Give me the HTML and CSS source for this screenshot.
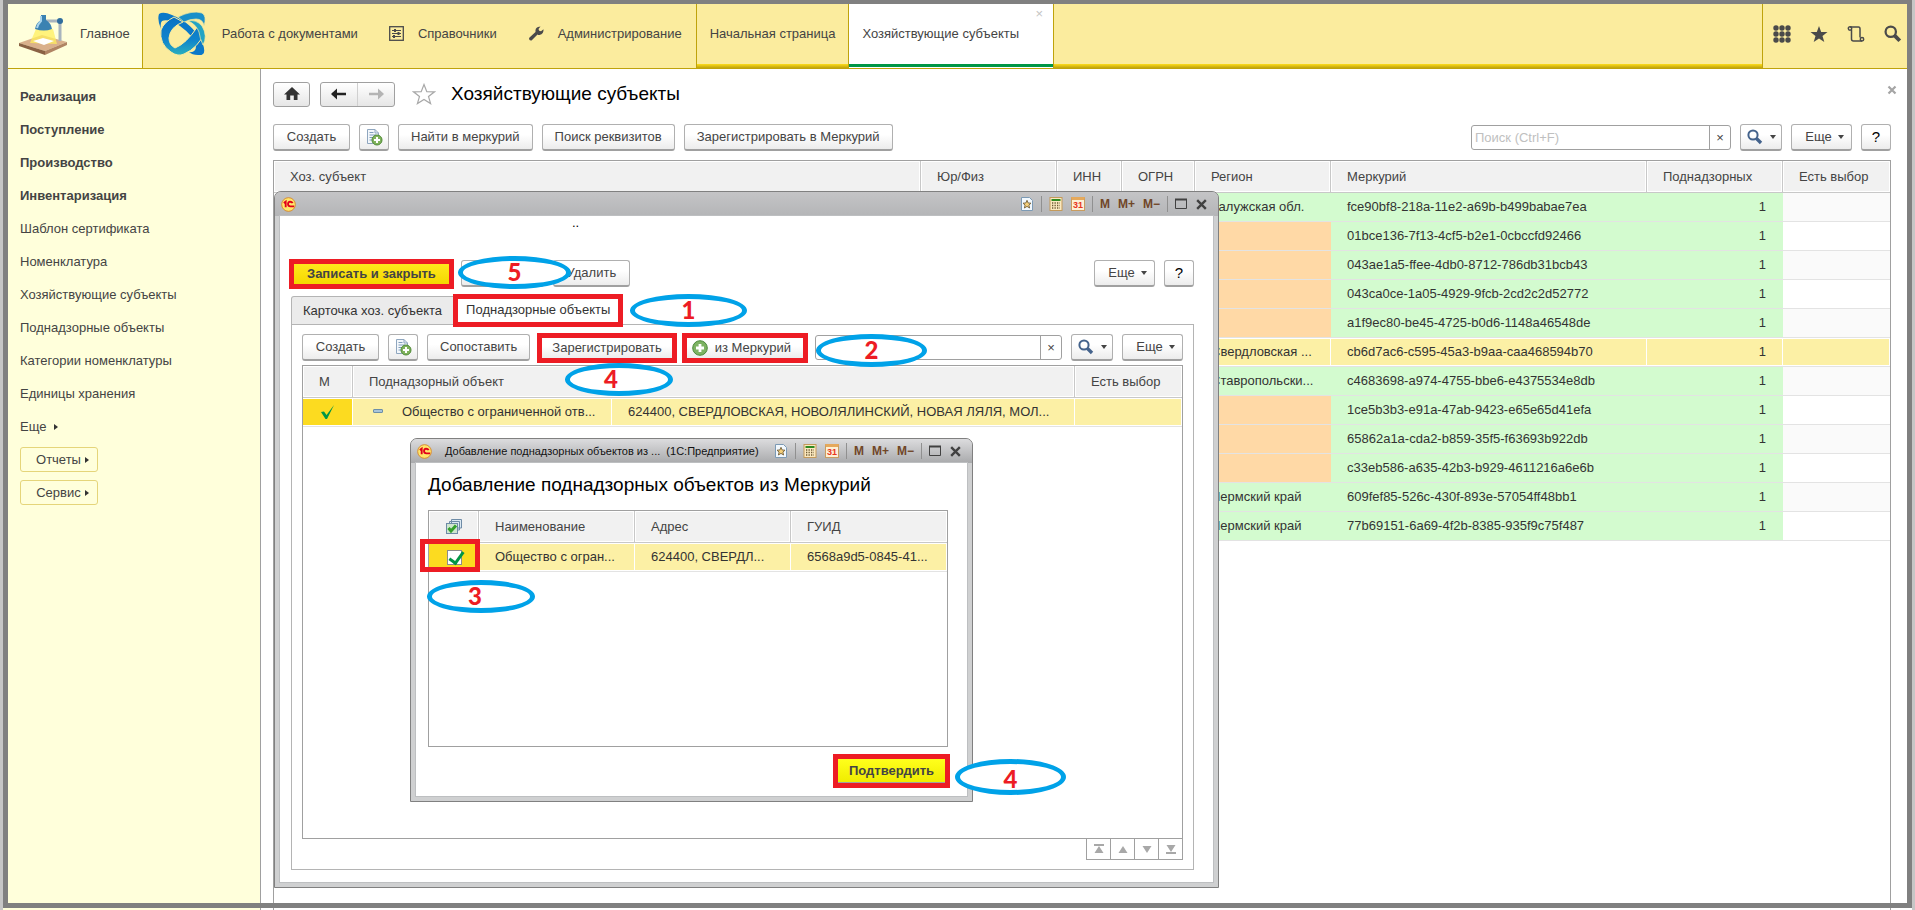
FILE: index.html
```html
<!DOCTYPE html>
<html lang="ru">
<head>
  <meta charset="UTF-8">
  <title>Хозяйствующие субъекты</title>
  <link rel="stylesheet" href="styles.css">
</head>
<body>
  <svg class="sprite" aria-hidden="true">
    <symbol id="i-search" viewBox="0 0 16 16">
      <circle cx="6" cy="6" r="4.6" fill="none" stroke="currentColor" stroke-width="2"/>
      <path d="M9.5 9.5 L14 14" stroke="currentColor" stroke-width="3.4"/>
    </symbol>
    <symbol id="i-copy" viewBox="0 0 18 18">
      <path d="M2.5 1.5 H10 L13.5 5 V15.5 H2.5 Z" fill="#f3f7fb" stroke="#8fa6bf"/>
      <path d="M10 1.5 V5 H13.5" fill="none" stroke="#8fa6bf"/>
      <path d="M4.500 4.500 H8.500 M4.500 7 H11 M4.500 9.500 H9 M4.500 12 H7" stroke="#7f9dbb"/>
      <circle cx="12" cy="12" r="5" fill="#7fb25c" stroke="#4f8a35"/>
      <path d="M12 9 V15 M9 12 H15" stroke="#fff" stroke-width="2"/>
    </symbol>
    <symbol id="i-plus" viewBox="0 0 16 16">
      <circle cx="8" cy="8" r="7.300" fill="#7db363" stroke="#4c8a3b"/>
      <path d="M8 4 V12 M4 8 H12" stroke="#fff" stroke-width="2.800"/>
    </symbol>
    <symbol id="i-1c" viewBox="0 0 16 16">
      <circle cx="8" cy="8" r="7.300" fill="#ffe66a" stroke="#d98a2b"/>
      <path d="M3 6.500 L5 5 V11 M12.500 6.500 Q11.500 5 9.800 5 Q7.500 5.300 7.500 7.500 Q7.600 10 10 10 H14" fill="none" stroke="#e2001a" stroke-width="2"/>
    </symbol>
    <symbol id="i-fav" viewBox="0 0 14 14">
      <path d="M1.500 .5 H9.500 L12.500 3.500 V13.500 H1.500 Z" fill="#f2f8fd" stroke="#7c9ab5"/>
      <path d="M7 3.300 L8.200 6 L11 6.200 L8.900 8.100 L9.600 11 L7 9.400 L4.400 11 L5.100 8.100 L3 6.200 L5.800 6 Z" fill="#f4cf7a" stroke="#75603a" stroke-width=".9"/>
    </symbol>
    <symbol id="i-calc" viewBox="0 0 14 14">
      <rect x="1" y=".5" width="12" height="13" fill="#fbe9c0" stroke="#c49a5b"/>
      <rect x="2.500" y="2" width="9" height="2" fill="#2f8a1f"/>
      <path d="M3 6 H11 M3 8.500 H11 M3 11 H11" stroke="#6d5a33" stroke-width="1.300" stroke-dasharray="1.300 1.200"/>
    </symbol>
    <symbol id="i-max" viewBox="0 0 12 12">
      <path d="M.5 1.500 H11.500 V10.500 H.5 Z" fill="none" stroke="#414141"/>
      <path d="M0 1.500 H12" stroke="#414141" stroke-width="2"/>
    </symbol>
    <symbol id="i-close" viewBox="0 0 12 12">
      <path d="M2 2 L10 10 M10 2 L2 10" stroke="#414141" stroke-width="2.200"/>
    </symbol>
    <symbol id="i-check" viewBox="0 0 16 16">
      <path d="M1 8 L4 7.500 L6.500 11 L14 1 L7 15 L5.500 15 Z" fill="#009646"/>
    </symbol>
  </svg>

  <div class="app">
    <header class="topbar">
      <nav class="sections">
        <a href="#" class="section active">
          <svg width="50" height="42" viewBox="0 0 50 42">
            <path d="M1 30 L24 22 L49 29 L27 38 Z" fill="#d9b08c"/>
            <path d="M1 30 L27 38 V42 L1 33 Z" fill="#8a6244"/>
            <path d="M27 38 L49 29 V32 L27 42 Z" fill="#b08463"/>
            <path d="M18 16 L35 16 L39 31 L12 30 Z" fill="#ffef5e" opacity=".75"/>
            <path d="M15 28 L25 25 L36 28 L26 32 Z" fill="#fff"/>
            <path d="M28 8 H42 V28" fill="none" stroke="#a8b4be" stroke-width="3"/>
            <circle cx="42" cy="8" r="3" fill="#2f6d9d"/>
            <path d="M23 2 H28 V7 Q33 10 34 16 Q26 19 17 16 Q18 10 23 7 Z" fill="#3a82b2"/>
            <path d="M23 3 V8 Q20 11 19 15" fill="none" stroke="#a9d4ec" stroke-width="2"/>
          </svg>
          <span>Главное</span>
        </a>
        <a href="#" class="section docs">
          <svg width="48" height="44" viewBox="0 0 48 44">
            <defs>
              <linearGradient id="orb" x1="0" y1="0" x2="0" y2="1">
                <stop offset="0" stop-color="#0a70c4"/>
                <stop offset=".6" stop-color="#0f84cc"/>
                <stop offset="1" stop-color="#2cb0bd"/>
              </linearGradient>
            </defs>
            <!-- орбита сзади -->
            <path d="M1 2 Q5 -1 14 3 Q34 11 44 30 Q50 44 40 43 Q34 43 31 40 Q38 41 38 34 Q36 24 22 14 Q10 6 4 9 Q2 11 3 17 Q-1 8 1 2 Z" fill="#0b78c8"/>
            <!-- орбита спереди -->
            <path d="M3 18 Q6 10 16 5 L25 10 Q12 15 11 26 Q11 33 17 36 Q28 32 40 14 L47 20 Q40 36 26 42 Q20 45 13 40 Q1 32 3 18 Z" fill="url(#orb)" stroke="#fbec9e"/>
            <path d="M20 5 Q34 -2 44 1 Q49 4 46 14 Q45 7 38 7 Q32 7 26 10 Z" fill="#1a8fc9" stroke="#fbec9e" stroke-width=".7"/>
            <path d="M30 9 Q38 7 44 14 Q50 24 45 33 Q42 27 41 20 Q38 12 30 9 Z" fill="#22a4c4" stroke="#fbec9e" stroke-width=".7"/>
          </svg>
          <span>Работа с документами</span>
        </a>
        <a href="#" class="section">
          <svg width="15" height="15" viewBox="0 0 15 15" fill="none" stroke="#4a4a4a">
            <rect x=".7" y=".7" width="13.600" height="13.600" stroke-width="1.300"/>
            <path d="M3 4.500 H12 M3 7.500 H12 M3 10.500 H12"/>
            <path d="M6 3 V6 M9.500 6 V9 M5 9 V12" stroke-width="2"/>
          </svg>
          <span>Справочники</span>
        </a>
        <a href="#" class="section">
          <svg width="16" height="15" viewBox="0 0 16 15">
            <path d="M1 12 L7.500 6 Q7 2 10 1 L12.500 .5 L10.500 3 L11.200 4.800 L13 5.300 L15.500 3.200 Q16 8 11.500 9 Q10.500 9.200 9.500 8.500 L3.500 14.500 Q1 15 1 12 Z" fill="#4a4a4a"/>
          </svg>
          <span>Администрирование</span>
        </a>
      </nav>
      <div class="tabs">
        <a href="#" class="tab">Начальная страница</a>
        <a href="#" class="tab current">Хозяйствующие субъекты<span class="tab-close">×</span></a>
      </div>
      <div class="tools">
        <button type="button" aria-label="Меню функций">
          <svg width="18" height="18" viewBox="0 0 18 18">
            <path d="M3 3 H3 M9 3 H9 M15 3 H15 M3 9 H3 M9 9 H9 M15 9 H15 M3 15 H3 M9 15 H9 M15 15 H15" stroke="#4a4a4a" stroke-width="5.400" stroke-linecap="round"/>
          </svg>
        </button>
        <button type="button" aria-label="Избранное">
          <svg width="18" height="18" viewBox="0 0 18 18">
            <path d="M9 1 L11.200 6.900 L17.500 7.100 L12.500 11 L14.300 17 L9 13.400 L3.700 17 L5.500 11 L.5 7.100 L6.800 6.900 Z" fill="#4a4a4a"/>
          </svg>
        </button>
        <button type="button" aria-label="История">
          <svg width="18" height="18" viewBox="0 0 18 18" fill="none" stroke="#4a4a4a" stroke-width="1.500">
            <path d="M3 2 H11.500 Q13 2 13 4 V12.500 M4.500 4.500 V14 Q4.500 16 6.500 16 H15"/>
            <circle cx="3" cy="3.500" r="1.700"/>
            <circle cx="15" cy="14.300" r="1.700"/>
          </svg>
        </button>
        <button type="button" aria-label="Поиск"><svg width="18" height="18"><use href="#i-search"/></svg></button>
      </div>
    </header>

    <div class="body">
      <aside class="sidebar">
        <a href="#" class="strong">Реализация</a>
        <a href="#" class="strong">Поступление</a>
        <a href="#" class="strong">Производство</a>
        <a href="#" class="strong">Инвентаризация</a>
        <a href="#">Шаблон сертификата</a>
        <a href="#">Номенклатура</a>
        <a href="#">Хозяйствующие субъекты</a>
        <a href="#">Поднадзорные объекты</a>
        <a href="#">Категории номенклатуры</a>
        <a href="#">Единицы хранения</a>
        <a href="#">Еще <i class="arrow-right"></i></a>
        <button type="button" class="side-btn">Отчеты<i class="arrow-right"></i></button>
        <button type="button" class="side-btn">Сервис<i class="arrow-right"></i></button>
      </aside>

      <main class="main">
        <div class="title-row">
          <button type="button" class="btn nav-btn" aria-label="Домой">
            <svg width="16" height="14" viewBox="0 0 16 14"><path d="M8 0 L16 7.500 H13.500 V13 H9.800 V8.500 H6.200 V13 H2.500 V7.500 H0 Z" fill="#333"/></svg>
          </button>
          <div class="nav-pair">
            <button type="button" aria-label="Назад">
              <svg width="16" height="12" viewBox="0 0 16 12"><path d="M1.500 6 H15" stroke="#222" stroke-width="2.500"/><path d="M0 6 L6 .5 V11.500 Z" fill="#222"/></svg>
            </button>
            <button type="button" aria-label="Вперед">
              <svg width="16" height="12" viewBox="0 0 16 12"><path d="M1 6 H14" stroke="#b4b4b4" stroke-width="2.500"/><path d="M16 6 L10 .5 V11.500 Z" fill="#b4b4b4"/></svg>
            </button>
          </div>
          <svg class="star" width="24" height="22" viewBox="0 0 24 22">
            <path d="M12 1.500 L14.800 8.600 L22.500 8.800 L16.500 13.400 L18.600 20.600 L12 16.500 L5.400 20.600 L7.500 13.400 L1.500 8.800 L9.200 8.600 Z" fill="none" stroke="#a8a8a8" stroke-width="1.200"/>
          </svg>
          <h1>Хозяйствующие субъекты</h1>
          <button type="button" class="page-close" aria-label="Закрыть">
            <svg width="10" height="10" viewBox="0 0 10 10"><path d="M1.500 1.500 L8.500 8.500 M8.500 1.500 L1.500 8.500" stroke="#a5a5a5" stroke-width="2.200"/></svg>
          </button>
        </div>

        <div class="toolbar">
          <button type="button" class="btn">Создать</button>
          <button type="button" class="btn icon-btn" aria-label="Скопировать"><svg width="18" height="18"><use href="#i-copy"/></svg></button>
          <button type="button" class="btn">Найти в меркурий</button>
          <button type="button" class="btn">Поиск реквизитов</button>
          <button type="button" class="btn">Зарегистрировать в Меркурий</button>
          <div class="search main-search">
            <input type="text" placeholder="Поиск (Ctrl+F)" aria-label="Поиск">
            <button type="button" aria-label="Очистить">×</button>
          </div>
          <button type="button" class="btn find-btn" aria-label="Найти"><svg width="16" height="16"><use href="#i-search"/></svg><i class="arrow-down"></i></button>
          <button type="button" class="btn more-btn">Еще <i class="arrow-down"></i></button>
          <button type="button" class="btn icon-btn help">?</button>
        </div>

        <div class="grid-box">
          <table class="grid">
            <colgroup>
              <col><col class="w136"><col class="w65"><col class="w73"><col class="w136"><col class="w316"><col class="w136"><col class="w107">
            </colgroup>
            <thead>
              <tr><th>Хоз. субъект</th><th>Юр/Физ</th><th>ИНН</th><th>ОГРН</th><th>Регион</th><th>Меркурий</th><th>Поднадзорных</th><th>Есть выбор</th></tr>
            </thead>
            <tbody>
              <tr><td></td><td></td><td></td><td></td><td class="ok">Калужская обл.</td><td class="ok">fce90bf8-218a-11e2-a69b-b499babae7ea</td><td class="ok num">1</td><td></td></tr>
              <tr><td></td><td></td><td></td><td></td><td class="warn"></td><td class="ok">01bce136-7f13-4cf5-b2e1-0cbccfd92466</td><td class="ok num">1</td><td></td></tr>
              <tr><td></td><td></td><td></td><td></td><td class="warn"></td><td class="ok">043ae1a5-ffee-4db0-8712-786db31bcb43</td><td class="ok num">1</td><td></td></tr>
              <tr><td></td><td></td><td></td><td></td><td class="warn"></td><td class="ok">043ca0ce-1a05-4929-9fcb-2cd2c2d52772</td><td class="ok num">1</td><td></td></tr>
              <tr><td></td><td></td><td></td><td></td><td class="warn"></td><td class="ok">a1f9ec80-be45-4725-b0d6-1148a46548de</td><td class="ok num">1</td><td></td></tr>
              <tr class="selected"><td></td><td></td><td></td><td></td><td>Свердловская ...</td><td>cb6d7ac6-c595-45a3-b9aa-caa468594b70</td><td class="num">1</td><td></td></tr>
              <tr><td></td><td></td><td></td><td></td><td class="ok">Ставропольски...</td><td class="ok">c4683698-a974-4755-bbe6-e4375534e8db</td><td class="ok num">1</td><td></td></tr>
              <tr><td></td><td></td><td></td><td></td><td class="warn"></td><td class="ok">1ce5b3b3-e91a-47ab-9423-e65e65d41efa</td><td class="ok num">1</td><td></td></tr>
              <tr><td></td><td></td><td></td><td></td><td class="warn"></td><td class="ok">65862a1a-cda2-b859-35f5-f63693b922db</td><td class="ok num">1</td><td></td></tr>
              <tr><td></td><td></td><td></td><td></td><td class="warn"></td><td class="ok">c33eb586-a635-42b3-b929-4611216a6e6b</td><td class="ok num">1</td><td></td></tr>
              <tr><td></td><td></td><td></td><td></td><td class="ok">Пермский край</td><td class="ok">609fef85-526c-430f-893e-57054ff48bb1</td><td class="ok num">1</td><td></td></tr>
              <tr><td></td><td></td><td></td><td></td><td class="ok">Пермский край</td><td class="ok">77b69151-6a69-4f2b-8385-935f9c75f487</td><td class="ok num">1</td><td></td></tr>
            </tbody>
          </table>
        </div>
      </main>
    </div>
  </div>

  <!-- Карточка хоз. субъекта -->
  <section class="window card-window">
    <div class="window-title">
      <svg width="15" height="15"><use href="#i-1c"/></svg>
      <span class="caption"></span>
      <div class="window-tools">
        <svg width="14" height="14"><use href="#i-fav"/></svg><i class="sep"></i>
        <svg width="14" height="14"><use href="#i-calc"/></svg>
        <span class="calendar">31</span><i class="sep"></i>
        <b>M</b><b>M+</b><b>M−</b><i class="sep"></i>
        <svg width="12" height="12"><use href="#i-max"/></svg>
        <svg width="13" height="13"><use href="#i-close"/></svg>
      </div>
    </div>
    <div class="window-body card-body">
      <p class="dots">..</p>
      <div class="toolbar">
        <button type="button" class="btn marked primary">Записать и закрыть</button>
        <button type="button" class="btn save-btn" aria-label="Записать"></button>
        <button type="button" class="btn">Удалить</button>
        <span class="spacer"></span>
        <button type="button" class="btn more-btn">Еще <i class="arrow-down"></i></button>
        <button type="button" class="btn icon-btn help">?</button>
      </div>
      <div class="card-tabs">
        <button type="button" class="card-tab">Карточка хоз. субъекта</button>
        <button type="button" class="card-tab marked">Поднадзорные объекты</button>
      </div>
      <div class="card-panel">
        <div class="toolbar">
          <button type="button" class="btn">Создать</button>
          <button type="button" class="btn icon-btn" aria-label="Скопировать"><svg width="18" height="18"><use href="#i-copy"/></svg></button>
          <button type="button" class="btn">Сопоставить</button>
          <button type="button" class="btn marked">Зарегистрировать</button>
          <button type="button" class="btn marked with-icon"><svg width="16" height="16"><use href="#i-plus"/></svg>из Меркурий</button>
          <div class="search">
            <input type="text" aria-label="Поиск">
            <button type="button" aria-label="Очистить">×</button>
          </div>
          <button type="button" class="btn find-btn" aria-label="Найти"><svg width="16" height="16"><use href="#i-search"/></svg><i class="arrow-down"></i></button>
          <button type="button" class="btn more-btn">Еще <i class="arrow-down"></i></button>
        </div>
        <div class="grid-box">
          <table class="grid">
            <colgroup><col class="w50"><col class="w259"><col><col class="w107"></colgroup>
            <thead>
              <tr><th>М</th><th colspan="2">Поднадзорный объект</th><th>Есть выбор</th></tr>
            </thead>
            <tbody>
              <tr class="selected">
                <td class="mark"><svg width="16" height="16"><use href="#i-check"/></svg></td>
                <td class="object"><i class="minus"></i>Общество с ограниченной отв...</td>
                <td>624400, СВЕРДЛОВСКАЯ, НОВОЛЯЛИНСКИЙ, НОВАЯ ЛЯЛЯ, МОЛ...</td>
                <td></td>
              </tr>
            </tbody>
          </table>
        </div>
        <div class="pager">
          <button type="button" aria-label="В начало"><svg width="10" height="10"><path d="M0 0 H10 V2 H0 Z M5 2 L9.500 9 H.5 Z" fill="#a8a8a8"/></svg></button>
          <button type="button" aria-label="Вверх"><svg width="10" height="10"><path d="M5 2 L9.500 9 H.5 Z" fill="#a8a8a8"/></svg></button>
          <button type="button" aria-label="Вниз"><svg width="10" height="10"><path d="M5 9 L9.500 2 H.5 Z" fill="#a8a8a8"/></svg></button>
          <button type="button" aria-label="В конец"><svg width="10" height="10"><path d="M0 8 H10 V10 H0 Z M5 8 L9.500 1 H.5 Z" fill="#a8a8a8"/></svg></button>
        </div>
      </div>
    </div>
  </section>

  <!-- Добавление объектов -->
  <section class="window add-window">
    <div class="window-title">
      <svg width="15" height="15"><use href="#i-1c"/></svg>
      <span class="caption">Добавление поднадзорных объектов из ...&nbsp; (1С:Предприятие)</span>
      <div class="window-tools">
        <svg width="14" height="14"><use href="#i-fav"/></svg><i class="sep"></i>
        <svg width="14" height="14"><use href="#i-calc"/></svg>
        <span class="calendar">31</span><i class="sep"></i>
        <b>M</b><b>M+</b><b>M−</b><i class="sep"></i>
        <svg width="12" height="12"><use href="#i-max"/></svg>
        <svg width="13" height="13"><use href="#i-close"/></svg>
      </div>
    </div>
    <div class="window-body add-body">
      <h2>Добавление поднадзорных объектов из Меркурий</h2>
      <div class="grid-box">
        <table class="grid">
          <colgroup><col class="w50"><col><col><col></colgroup>
          <thead>
            <tr>
              <th class="mark">
                <svg width="16" height="16" viewBox="0 0 16 16">
                  <path d="M5.500 .5 H15.500 V9 H5.500 Z M3.500 2.500 H13.500 V11 H3.500 Z" fill="#dbe8f2" stroke="#6e8ba6"/>
                  <rect x=".5" y="4.500" width="11" height="10" fill="#cfe6cf" stroke="#6e8ba6"/>
                  <path d="M2.500 9 L5 12 L10 6.500" fill="none" stroke="#34a02c" stroke-width="3"/>
                </svg>
              </th>
              <th>Наименование</th><th>Адрес</th><th>ГУИД</th>
            </tr>
          </thead>
          <tbody>
            <tr class="selected">
              <td class="mark boxed"><input type="checkbox" class="tick" checked aria-label="Выбрать"></td>
              <td>Общество с огран...</td><td>624400, СВЕРДЛ...</td><td>6568a9d5-0845-41...</td>
            </tr>
          </tbody>
        </table>
      </div>
      <button type="button" class="btn marked confirm">Подтвердить</button>
    </div>
  </section>

  <!-- Номера шагов -->
  <div class="step step-save">5</div>
  <div class="step step-tab">1</div>
  <div class="step step-mercury">2</div>
  <div class="step step-register">4</div>
  <div class="step step-tick">3</div>
  <div class="step step-confirm">4</div>
  <div class="frame"></div>
</body>
</html>
```
FILE: styles.css
```css
* {
  box-sizing: border-box;
}

body {
  margin: 0;
  height: 100vh;
  overflow: hidden;
  position: relative;
  font: 13px/16px "Liberation Sans", Arial, sans-serif;
  color: #444;
  background: #fff;
}

button, input {
  font: inherit;
  color: inherit;
}

button {
  cursor: pointer;
}

a {
  color: inherit;
  text-decoration: none;
}

svg {
  display: block;
  flex: none;
}

.sprite {
  display: none;
}

.frame {
  position: absolute;
  top: 0;
  right: 3px;
  bottom: 2px;
  left: 3px;
  border: 5px solid #808080;
  border-top-width: 4px;
  pointer-events: none;
}

.app {
  height: 100%;
  display: flex;
  flex-direction: column;
  padding: 4px 5px 0 0;
  border: solid #c6c6c6;
  border-width: 0 3px;
}

/* top bar */
.topbar {
  display: flex;
  height: 65px;
  background: #fbec9e;
  border-bottom: 1px solid #bfa30c;
}

.sections {
  display: flex;
  border-right: 1px solid #bfa30c;
  padding-right: 14px;
}

.section {
  display: flex;
  align-items: center;
  gap: 14px;
  padding: 0 16px 5px 15px;
}

.section.active {
  gap: 12px;
  padding-right: 12px;
  background: #ffffdb;
  border-right: 1px solid #bfa30c;
}

.section.docs {
  gap: 16px;
}

.sections .section:last-child {
  padding-right: 0;
}

.tabs {
  flex: 1;
  display: flex;
  background: linear-gradient(#fbec9e 60px, #fddc1c 60px, #bfa30c);
}

.tab {
  position: relative;
  padding: 22px 13px 0;
  border-right: 1px solid #bfa30c;
}

.tab.current {
  background: linear-gradient(#fff 60px, #009646 60px, #009646 63px, #fff 63px);
  padding-right: 34px;
}

.tab-close {
  position: absolute;
  top: 2px;
  right: 10px;
  color: #c4c4c4;
}

.tools {
  display: flex;
  gap: 19px;
  padding: 0 5px 5px 10px;
  border-left: 1px solid #bfa30c;
  color: #4a4a4a;
}

.tools button {
  padding: 0;
  border: 0;
  background: none;
}

/* sidebar */
.body {
  flex: 1;
  display: flex;
  min-height: 0;
}

.sidebar {
  width: 258px;
  flex: none;
  display: flex;
  flex-direction: column;
  align-items: flex-start;
  padding: 11px 0 0 17px;
  background: #ffffdb;
  border-right: 1px solid #a0a0a0;
}

.sidebar a {
  line-height: 33px;
}

.strong {
  font-weight: bold;
}

.arrow-right, .arrow-down {
  display: inline-block;
  border: 3px solid transparent;
}

.arrow-right {
  border-left: 4px solid #333;
  border-right: 0;
  margin-left: 4px;
  vertical-align: 1px;
}

.arrow-down {
  border-top: 4px solid #444;
  border-bottom: 0;
}

.side-btn {
  width: 78px;
  height: 25px;
  margin: 4px 0;
  padding: 0 0 0 7px;
  border: 1px solid #e5d57a;
  border-radius: 3px;
  background: none;
  text-align: center;
}

/* main form */
.main {
  flex: 1;
  min-width: 0;
  display: flex;
  flex-direction: column;
  padding: 12px 16px 0 12px;
}

.title-row {
  display: flex;
  align-items: center;
  height: 26px;
  margin-bottom: 17px;
}

.btn {
  display: flex;
  align-items: center;
  justify-content: center;
  height: 27px;
  min-width: 77px;
  padding: 0 12px;
  border: 1px solid #b0b0b0;
  border-bottom: 2px solid #a0a0a0;
  border-radius: 3px;
  background: linear-gradient(#fff 40%, #ececec);
  white-space: nowrap;
}

.nav-btn, .nav-pair {
  height: 25px;
  border: 1px solid #a0a0a0;
  border-radius: 3px;
  background: linear-gradient(#fff, #e6e6e6);
}

.nav-btn {
  min-width: 0;
  width: 37px;
  padding: 0;
}

.nav-pair {
  display: flex;
  width: 75px;
  margin: 0 17px 0 10px;
}

.nav-pair button {
  flex: 1;
  display: grid;
  place-items: center;
  padding: 0;
  border: 0;
  background: none;
}

.nav-pair button + button {
  border-left: 1px solid #d0d0d0;
}

h1, h2 {
  margin: 0;
  color: #000;
  font-weight: normal;
  font-size: 19px;
  line-height: 24px;
}

h1 {
  margin-left: 15px;
}

.page-close {
  align-self: flex-start;
  margin: 4px -6px 0 auto;
  padding: 0;
  border: 0;
  background: none;
}

.toolbar {
  display: flex;
  align-items: center;
  gap: 9px;
}

.spacer {
  flex: 1;
}

.icon-btn {
  min-width: 0;
  width: 30px;
  padding: 0;
}

.save-btn {
  width: 83px;
}

.help {
  color: #000;
  font-size: 15px;
}

.find-btn {
  min-width: 0;
  width: 42px;
  padding: 0;
  gap: 7px;
  color: #44638c;
}

.more-btn {
  min-width: 0;
  width: 61px;
  padding: 0 0 0 6px;
  gap: 6px;
}

.search {
  flex: 1;
  display: flex;
  height: 25px;
  border: 1px solid #a0a0a0;
  border-radius: 3px;
  background: #fff;
}

.main-search {
  flex: none;
  width: 260px;
  margin-left: auto;
}

.search input {
  flex: 1;
  min-width: 0;
  padding: 0 3px;
  border: 0;
  background: none;
}

.search input::placeholder {
  color: #c0c0c0;
}

.search button {
  width: 21px;
  padding: 0;
  border: 0;
  border-left: 1px solid #a0a0a0;
  background: none;
}

/* tables */
.grid-box {
  flex: 1;
  border: 1px solid #a0a0a0;
}

.main > .grid-box {
  margin-top: 9px;
  border-bottom: 0;
}

.grid {
  width: 100%;
  table-layout: fixed;
  border-collapse: separate;
  border-spacing: 0;
}

.grid th {
  height: 32px;
  padding: 0 0 0 16px;
  border-right: 1px solid #c8c8c8;
  border-bottom: 1px solid #c8c8c8;
  background: #f1f1f1;
  box-shadow: inset 0 0 0 1px #fff;
  font-weight: normal;
  text-align: left;
}

.grid td {
  height: 29px;
  padding: 0 0 0 16px;
  border-bottom: 1px solid #e3e3e3;
  color: #333;
  white-space: nowrap;
}

.grid th:last-child {
  border-right: 0;
}

.grid tbody tr:nth-child(odd) {
  background: #fafafa;
}

.grid .ok {
  background: #d3fbcf;
}

.grid .warn {
  background: #ffd9a6;
}

.grid .num {
  padding: 0 17px 0 0;
  text-align: right;
}

.grid .selected td {
  background: #fcf0a5;
  box-shadow: inset 0 1px #fff, inset -1px -1px #fff;
}

.grid .mark {
  padding: 0;
}

.grid .mark svg {
  margin: 0 auto;
}

.grid .selected .mark {
  background: #fcdb20;
}

.w50 { width: 50px; }
.w65 { width: 65px; }
.w73 { width: 73px; }
.w107 { width: 107px; }
.w136 { width: 136px; }
.w259 { width: 259px; }
.w316 { width: 316px; }

/* floating windows */
.window {
  position: absolute;
  display: flex;
  flex-direction: column;
  border: 1px solid #808080;
  border-radius: 7px 7px 0 0;
  background: #cfd0d1;
  padding: 0 5px 5px;
}

.card-window {
  left: 274px;
  top: 191px;
  width: 945px;
  height: 697px;
}

.add-window {
  left: 410px;
  top: 438px;
  width: 563px;
  height: 364px;
}

.window-title {
  display: flex;
  align-items: center;
  height: 24px;
  margin: 0 -5px;
  padding: 0 10px 0 6px;
  border-radius: 6px 6px 0 0;
  background: linear-gradient(#c4c4c6, #b4b5b7);
}

.add-window .window-title {
  background: linear-gradient(#dcdcde, #a9aaac);
}

.caption {
  flex: 1;
  margin-left: 13px;
  color: #111;
  font-size: 11px;
}

.window-tools {
  display: flex;
  align-items: center;
  gap: 8px;
  color: #704628;
  font-size: 12px;
}

.window-tools .sep {
  width: 1px;
  height: 16px;
  margin: 0 -1px;
  background: #909090;
}

.calendar {
  width: 14px;
  height: 14px;
  border: 1px solid #c99c5f;
  border-top: 3px solid #e5a95c;
  background: #fdf0d6;
  color: #e8341c;
  font: bold 9px/10px "Liberation Sans", Arial, sans-serif;
  text-align: center;
}

.window-body {
  flex: 1;
  display: flex;
  flex-direction: column;
  background: #fff;
  box-shadow: 0 0 0 1px #bdbfc1;
}

.card-body {
  padding: 0 19px 12px 11px;
}

.dots {
  margin: 0;
  padding: 0 0 0 281px;
  height: 44px;
  line-height: 14px;
  color: #000;
}

.marked {
  outline: 5px solid #ed1c24;
}

.btn.marked {
  height: 20px;
  margin: 0 3px;
  padding: 0 10px;
  border: 0;
  border-radius: 0;
}

.btn.with-icon {
  gap: 7px;
  padding: 0 12px 0 5px;
}

.btn.primary {
  padding: 0 13px;
  background: linear-gradient(#ffe81c, #f4d800);
  font-weight: bold;
}

.card-tabs {
  display: flex;
  align-items: center;
  height: 28px;
  margin-top: 9px;
}

.card-tab {
  height: 28px;
  padding: 0 11px;
  border: 1px solid #b4b4b4;
  border-bottom: 0;
  border-radius: 3px 0 0 0;
  background: #ebebeb;
  color: #333;
}

.card-tab.marked {
  height: 23px;
  margin-left: 4px;
  padding: 0 8px;
  border: 0;
  border-radius: 0;
  background: #fff;
  z-index: 1;
}

.card-panel {
  flex: 1;
  display: flex;
  flex-direction: column;
  padding: 9px 10px;
  border: 1px solid #b4b4b4;
}

.card-panel .grid-box {
  margin-top: 4px;
}

.card-panel th:first-child {
  text-align: center;
  padding: 0 6px 0 0;
}

.grid .object {
  padding-left: 20px;
}

.minus {
  display: inline-block;
  width: 10px;
  height: 4px;
  margin-right: 19px;
  border: 1px solid #6d8fa8;
  border-radius: 1px;
  background: #a9c4d8;
  vertical-align: 3px;
}

.pager {
  display: flex;
  align-self: flex-end;
}

.pager button {
  display: grid;
  place-items: center;
  width: 24px;
  height: 21px;
  padding: 0;
  border: 1px solid #a0a0a0;
  border-width: 0 0 1px 1px;
  background: none;
}

.pager button:last-child {
  width: 25px;
  border-right-width: 1px;
}

.add-body {
  padding: 10px 19px 13px 12px;
}

.add-body .grid-box {
  margin: 13px 0 12px;
}

.boxed {
  position: relative;
}

.boxed::after {
  content: "";
  position: absolute;
  inset: -4px -1px -1px -9px;
  border: 5px solid #ed1c24;
}

.tick {
  appearance: none;
  display: block;
  width: 15px;
  height: 15px;
  margin: 0 auto;
  border: 1px solid #8c8c8c;
  background: #fff;
}

.tick:checked::after {
  content: "";
  display: block;
  width: 6px;
  height: 12px;
  margin: -2px 0 0 4px;
  border: solid #009646;
  border-width: 0 3px 3px 0;
  transform: rotate(36deg);
}

.btn.confirm {
  align-self: flex-end;
  height: 24px;
  padding: 0 11px;
  background: linear-gradient(#ffff1c, #f0ec00);
  border-bottom: 1px solid #a0a0a0;
  font-weight: bold;
}

/* step marks */
.step {
  position: absolute;
  width: 111px;
  height: 33px;
  border: 5px solid #00a2e8;
  border-radius: 50%;
  background: #fff;
  color: #ed1c24;
  font: 900 24px/22px Lato, sans-serif;
  text-align: center;
}

.step-save { left: 458px; top: 256px; width: 113px; }
.step-tab { left: 630px; top: 294px; width: 117px; }
.step-mercury { left: 816px; top: 334px; }
.step-register { left: 565px; top: 363px; width: 108px; padding-right: 16px; }
.step-tick { left: 427px; top: 580px; width: 108px; padding-right: 12px; }
.step-confirm { left: 955px; top: 759px; height: 36px; line-height: 30px; }
```
